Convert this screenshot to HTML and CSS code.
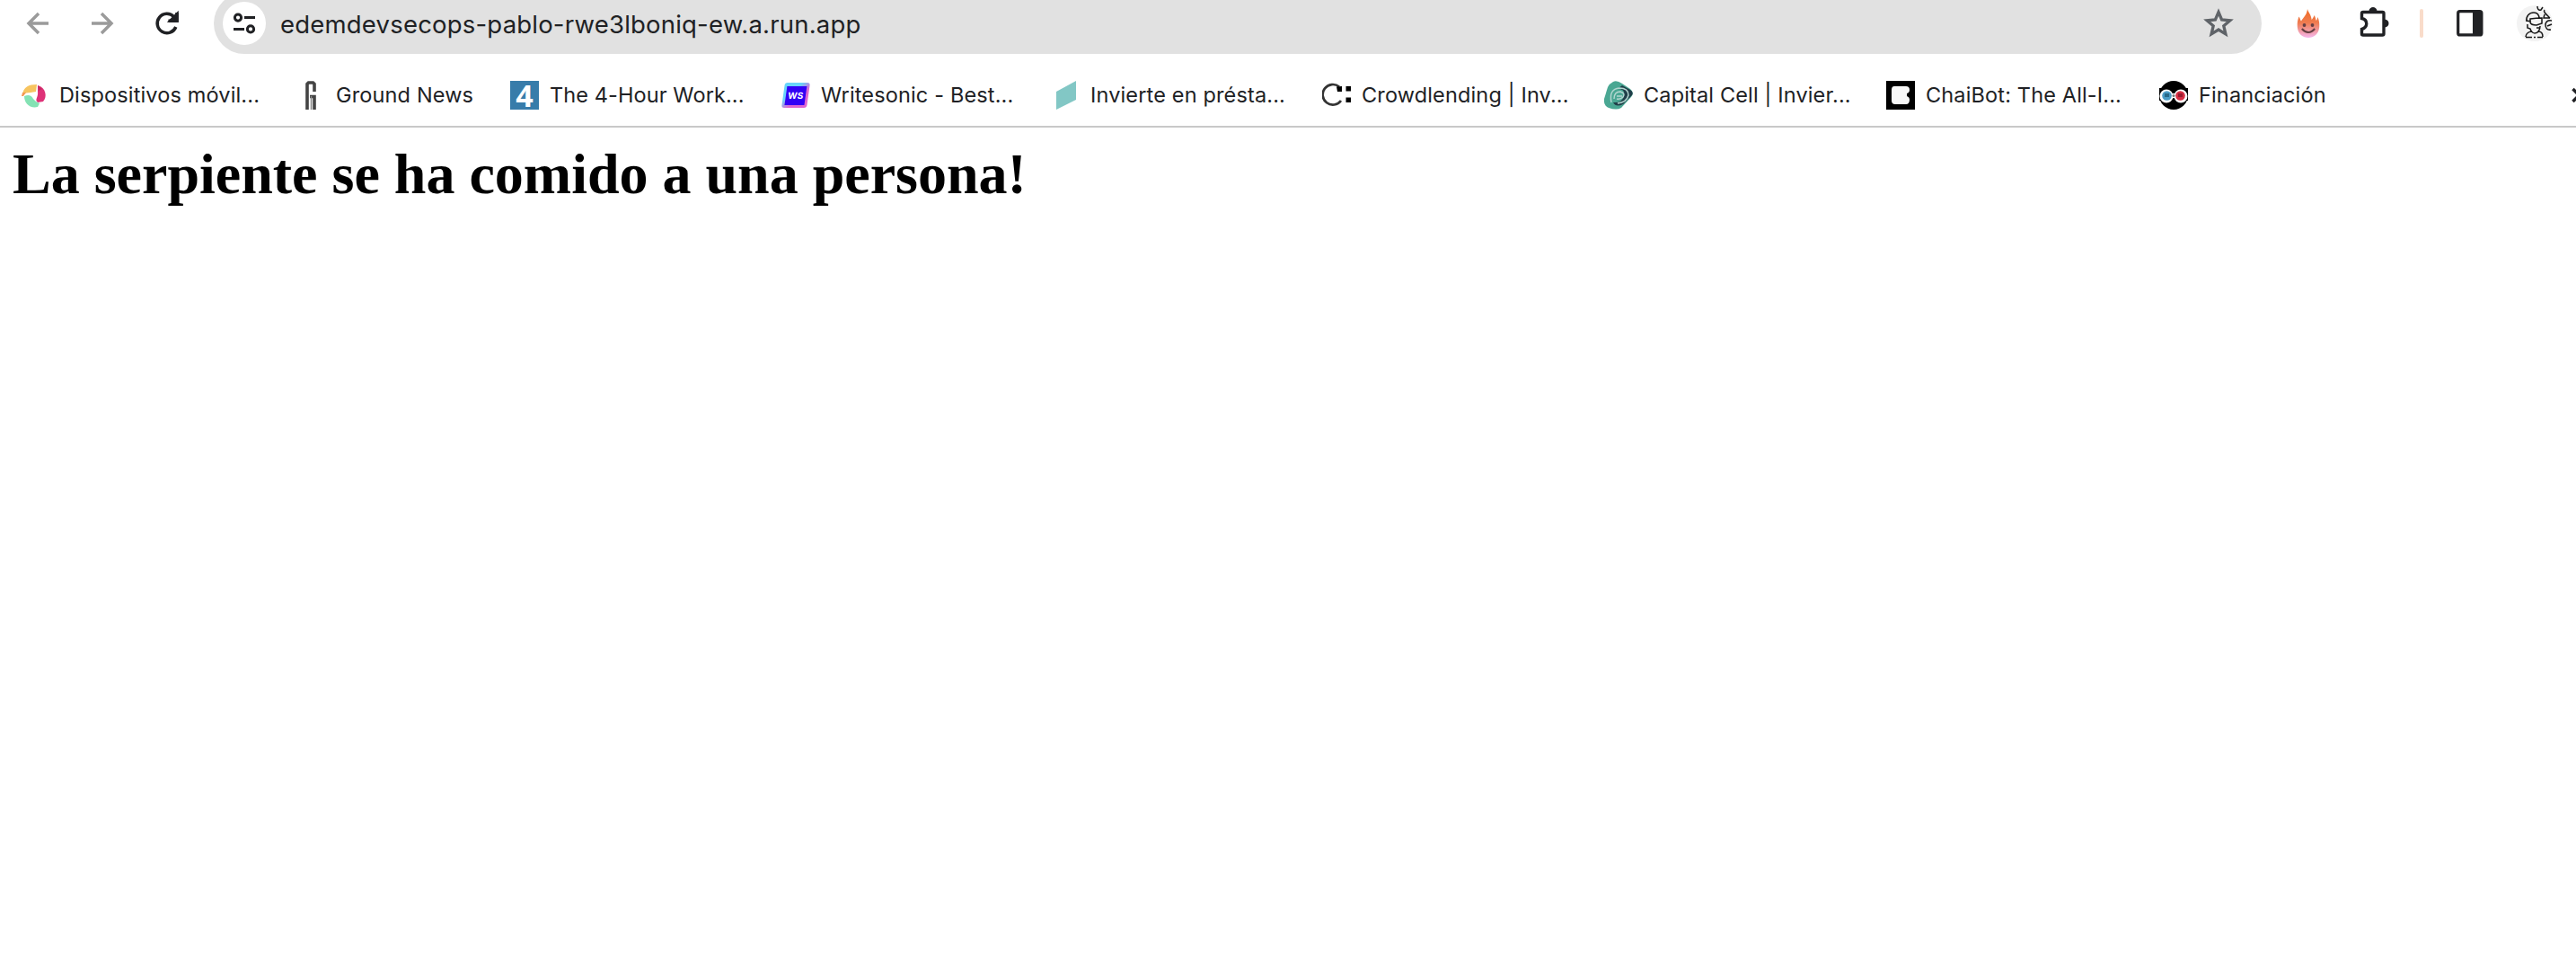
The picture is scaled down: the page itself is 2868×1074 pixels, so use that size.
FILE: index.html
```html
<!DOCTYPE html>
<html lang="es">
<head>
<meta charset="utf-8">
<title>edemdevsecops-pablo</title>
<link rel="stylesheet" href="styles.css">
</head>
<body>
<header class="browser">
  <div class="toolbar">
    <nav class="history">
      <svg class="icon muted" viewBox="0 0 32 32"><path d="M28 16H6M17 5L6 16L17 27"/></svg>
      <svg class="icon muted" viewBox="0 0 32 32"><path d="M4 16H26M15 5L26 16L15 27"/></svg>
      <svg class="icon dark" viewBox="0 0 32 32"><path d="M25.8 20A10.7 10.7 0 1 1 23.6 8.6L26.5 11.5"/><path d="M27 4V13.2H17.5" /><path class="solid" d="M27 6V13H20Z"/></svg>
    </nav>
    <div class="omnibox">
      <span class="site-info"><svg viewBox="0 0 32 32"><circle cx="9" cy="9.6" r="3.6"/><path d="M16 9.6H28M4 22.4H16"/><circle cx="23" cy="22.4" r="3.6"/></svg></span>
      <span class="url">edemdevsecops-pablo-rwe3lboniq-ew.a.run.app</span>
      <svg class="star" viewBox="0 0 36 36"><path d="M18 5.5L21.6 14L30.8 14.8L23.8 20.8L25.9 29.8L18 25L10.1 29.8L12.2 20.8L5.2 14.8L14.4 14Z"/></svg>
    </div>
    <div class="actions">
      <svg class="flame" viewBox="0 0 32 32">
        <defs><linearGradient id="fire" x1="0" y1="0" x2="0" y2="1"><stop offset="0" stop-color="#f06a24"/><stop offset=".48" stop-color="#ef7c50"/><stop offset="1" stop-color="#f5b6ec"/></linearGradient></defs>
        <path fill="url(#fire)" d="M15 0C16 4 19 6 19.7 12C21.5 10 22 8.5 22.5 7C24 9 24 11 24.8 13C26 12 26 10 26.5 9C28 13 28.5 16 28.2 20C27.7 28 22 32 16 32S4.300 28 3.800 20C3.500 16 4 12 5.500 8.500C7 10 6.600 12 8 13.500C11 9 14.500 6 15 0Z"/>
        <circle cx="11.500" cy="18" r="1.900" fill="#653f43"/><circle cx="20.500" cy="18" r="1.900" fill="#653f43"/><path d="M8.800 22Q16 30 23.200 22" fill="none" stroke="#653f43" stroke-width="2"/>
      </svg>
      <svg class="puzzle" viewBox="0 0 36 36"><path class="outline" d="M5 7.500H26.500Q28 7.500 28 9V31.500Q28 33 26.500 33H5Q3.500 33 3.500 31.500V26.500C10.500 24.500 10.500 16 3.500 14.500V9Q3.500 7.500 5 7.500Z"/><path class="solid" d="M11.500 6.500C11.500 .500 20.500 .500 20.500 6.500ZM29 15.500C35 15.500 35 24.500 29 24.500Z"/></svg>
      <i class="separator"></i>
      <svg class="panel" viewBox="0 0 30 30"><rect x="1.700" y="1.700" width="26.200" height="26.200" rx="2" fill="none" stroke="#202124" stroke-width="3.200"/><path d="M18 1H28V29H18Z" fill="#202124"/></svg>
      <svg class="avatar" viewBox="0 0 40 40"><circle cx="20" cy="20" r="20" fill="#f3f3f3"/><g fill="none" stroke="#171717" stroke-width="1.500"><path d="M11 18C10 12 14 8 19 8C23 8 25 11 25 15M11 17L16 18M15 15Q22 14 28 14V20L22 22Q16 22 15 19ZM12 21V25L15 26C16 30 19 31 20 31C24 31 26 27 26 23M22 25H25M10 35C10 31 14 29 17 29M24 29C27 29 29 31 29 35M10 35.500H17M19 35.500H21M23 35.500H29"/><path d="M23 1Q23 6 27 5L29 2M31 5C29 7 33 10 37 14M31 10L30 14L37 14M39 17Q33 16 32 21Q32 28 38 27M34 23L39 21"/></g></svg>
    </div>
  </div>
  <nav class="bookmarks">
    <a class="bookmark dispositivos"><svg viewBox="0 0 32 32"><path fill="#f7c45f" d="M3 15C4 7 10 4 19 4L18 12L12 13Q7 13 3 15Z"/><path fill="#f39852" d="M2 17L3 13L7 13L4 17Z"/><path fill="#de3278" d="M20 5C29 7 31 18 26 23L20 24C16 21 21 18 20 12Z"/><path fill="#c42b60" d="M20 5L25 9L21 11Z"/><path fill="#84e2b4" d="M5 17Q12 14 15 20Q18 24 22 25L20 29C11 31 5 25 5 17Z"/></svg><span>Dispositivos móvil...</span></a>
    <a class="bookmark ground"><svg viewBox="0 0 32 32"><path d="M12 32V3.500L13.500 2H18.500L20 3.500V12M15 17.500H20V32" fill="none" stroke="#444" stroke-width="3.600"/><path d="M16.500 17V32" stroke="#888" stroke-width="1.500"/></svg><span>Ground News</span></a>
    <a class="bookmark four"><i class="four-logo">4</i><span>The 4-Hour Work...</span></a>
    <a class="bookmark writesonic"><i class="ws-logo"><b>WS</b></i><span>Writesonic - Best...</span></a>
    <a class="bookmark invierte"><svg viewBox="0 0 32 32"><path fill="#82c7c5" d="M6 12L28 0V21L6 32Z"/></svg><span>Invierte en présta...</span></a>
    <a class="bookmark crowd"><svg viewBox="0 0 32 32"><path fill="none" stroke="#333" stroke-width="2.700" d="M21 22A11.300 11.300 0 1 1 19 6.500"/><path d="M16 6.500L22 6V12H17ZM26.500 6H32V11.500H26.500ZM26.500 18.500H32V24H26.500Z"/></svg><span>Crowdlending | Inv...</span></a>
    <a class="bookmark capital"><svg viewBox="0 0 32 32"><path fill="#4aa793" d="M10 1Q14-1 20 3L29 9Q34 13 30 18L19 30Q14 33 5 30Q-1 27 0 20L4 7Q6 3 10 1Z"/><path fill="#213f49" d="M20 5L29 10Q34 13 30 17L21 26Q13 30 10 24Q20 25 22 17T15 9Z"/><path d="M8 24Q5 9 17 8Q27 8 27 16Q25 24 15 25M11 20Q11 12 18 12Q24 14 21 18Q18 21 14 20M14 17H20" fill="none" stroke="#b2d6d0" stroke-width="1.500"/></svg><span>Capital Cell | Invier...</span></a>
    <a class="bookmark chai"><svg viewBox="0 0 32 32"><path d="M0 0H32V32H0Z"/><path fill="#f7f7f7" d="M9 6H22Q26 6 26 10Q26 13 23 14V17Q26 18 26 21Q26 26 22 26H10Q6 26 6 22V10Q6 6 9 6Z"/></svg><span>ChaiBot: The All-I...</span></a>
    <a class="bookmark financiacion"><svg viewBox="0 0 32 32"><circle cx="16" cy="16" r="16"/><path d="M0 8H3V22H0ZM29 8H32V22H29Z"/><g fill="#fff"><circle cx="8" cy="17" r="7.500"/><circle cx="24" cy="17" r="7.500"/><path d="M13 14H19V19H13Z"/></g><circle cx="8.500" cy="16.500" r="5.300" fill="#4a9bc5"/><circle cx="23.500" cy="16.500" r="5.300" fill="#d62e43"/><path d="M6 14H11V18H6Z" fill="#276887"/><path d="M21 14H26V18H21Z" fill="#961d30"/><circle cx="16" cy="16.500" r="1.500" fill="#777"/></svg><span>Financiación</span></a>
    <svg class="more" viewBox="0 0 20 20"><path d="M1.500 3L8.500 10L1.500 17M9.500 3L16.500 10L9.500 17"/></svg>
  </nav>
</header>
<main><h1>La serpiente se ha comido a una persona!</h1></main>
</body>
</html>
```
FILE: styles.css
```css
* { box-sizing: border-box; }
body { margin: 0; background: #fff; color: #000; overflow: hidden; }
svg { display: block; flex: none; }
.browser { display: flow-root; height: 142px; border-bottom: 2px solid #c9c9c9; color: #202124; font-family: Inter, "Noto Sans", sans-serif; }
.toolbar { display: flex; align-items: center; height: 68px; margin-top: -8px; }
.history { display: flex; gap: 40px; width: 238px; padding-left: 26px; }
.icon { width: 32px; height: 32px; fill: none; stroke-width: 3.5; }
.muted { stroke: #9b9b9b; }
.dark { stroke: #202124; }
.solid { fill: #202124; }
.omnibox { display: flex; align-items: center; width: 2280px; height: 68px; padding-left: 10px; padding-right: 30px; background: #e1e1e1; border-radius: 34px; }
.site-info { display: grid; place-items: center; flex: none; width: 48px; height: 48px; border-radius: 50%; background: #fff; }
.site-info svg { width: 32px; height: 32px; fill: none; stroke: #202124; stroke-width: 3; }
.url { flex: 1; margin-left: 16px; padding-top: 1px; font-size: 27.5px; letter-spacing: .2px; line-height: 36px; white-space: nowrap; }
.star { width: 36px; height: 36px; fill: none; stroke: #5f6368; stroke-width: 3.3; }
.actions { display: flex; align-items: center; padding-left: 36px; }
.flame { width: 32px; height: 32px; }
.puzzle { width: 36px; height: 36px; margin-left: 40px; margin-top: -4px; }
.outline { fill: none; stroke: #202124; stroke-width: 3.4; }
.separator { width: 4px; height: 32px; margin-left: 32px; border-radius: 2px; background: #f9dcca; }
.panel { width: 30px; height: 30px; margin-left: 37px; }
.avatar { width: 40px; height: 40px; margin-left: 37px; overflow: visible; }
.bookmarks { display: flex; align-items: center; height: 80px; padding: 12px 0 0 22px; }
.bookmark { display: flex; flex: none; align-items: center; gap: 12px; height: 32px; font-size: 23.5px; letter-spacing: .15px; line-height: 32px; white-space: nowrap; }
.bookmark svg { width: 32px; height: 32px; }
.dispositivos { width: 308px; }
.ground { width: 238px; }
.four { width: 302px; letter-spacing: .1px; }
.writesonic { width: 300px; }
.invierte { width: 302px; }
.crowd { width: 314px; }
.capital { width: 314px; }
.chai { width: 304px; }
.financiacion { width: 459px; }
.four-logo { flex: none; width: 32px; height: 32px; background: #377caa; color: #fff; font: bold 34px/33px "Open Sans", sans-serif; text-align: center; }
.ws-logo { display: grid; place-items: center; flex: none; width: 28px; height: 28px; margin: 0 2px; background: linear-gradient(135deg, #69d4fa 35%, #df65d0 62%); border-radius: 3px; transform: skewX(-8deg); }
.ws-logo b { width: 22px; height: 21px; background: #3200f5; color: #fff; font: bold 10px/21px Inter, sans-serif; text-align: center; }
.more { width: 20px; height: 20px; fill: none; stroke: #202124; stroke-width: 3.5; }
h1 { margin: 0; padding: 15px 0 0 14px; font: bold 64px/74px "Liberation Serif", "Times New Roman", serif; white-space: nowrap; }
```
